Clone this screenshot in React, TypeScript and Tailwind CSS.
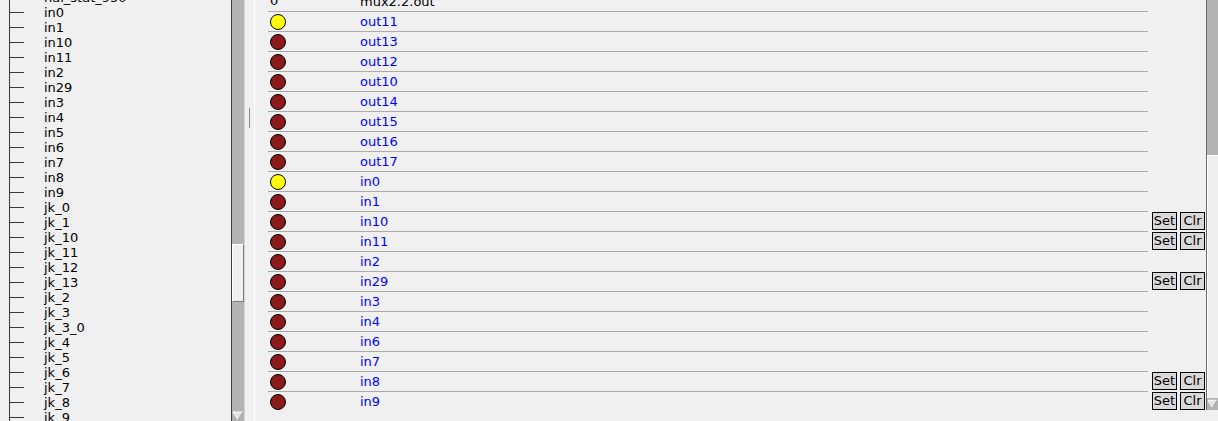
import React from 'react';

const treeItems = [
  'hal_stat_950', 'in0', 'in1', 'in10', 'in11', 'in2', 'in29', 'in3', 'in4', 'in5', 'in6', 'in7', 'in8', 'in9',
  'jk_0', 'jk_1', 'jk_10', 'jk_11', 'jk_12', 'jk_13', 'jk_2', 'jk_3', 'jk_3_0', 'jk_4', 'jk_5', 'jk_6', 'jk_7', 'jk_8', 'jk_9',
];

interface Pin {
  name: string;
  on: boolean;
  buttons?: boolean;
}

const pins: Pin[] = [
  { name: 'out11', on: true },
  { name: 'out13', on: false },
  { name: 'out12', on: false },
  { name: 'out10', on: false },
  { name: 'out14', on: false },
  { name: 'out15', on: false },
  { name: 'out16', on: false },
  { name: 'out17', on: false },
  { name: 'in0', on: true },
  { name: 'in1', on: false },
  { name: 'in10', on: false, buttons: true },
  { name: 'in11', on: false, buttons: true },
  { name: 'in2', on: false },
  { name: 'in29', on: false, buttons: true },
  { name: 'in3', on: false },
  { name: 'in4', on: false },
  { name: 'in6', on: false },
  { name: 'in7', on: false },
  { name: 'in8', on: false, buttons: true },
  { name: 'in9', on: false, buttons: true },
];

const DownArrow = () => (
  <svg width="12" height="10" viewBox="0 0 12 10" className="block">
    <polygon points="1,1 11,1 6,9" fill="#e4e4e4" stroke="#ffffff" strokeWidth="1" />
    <line x1="11" y1="1" x2="6" y2="9" stroke="#8a8a8a" strokeWidth="1" />
  </svg>
);

const TreeRow = ({ label }: { label: string }) => (
  <div className="h-[15px] flex items-center pl-[9px] whitespace-nowrap">
    <div className="w-px h-full bg-[#3a3a3a]" />
    <div className="w-[14px] h-px bg-[#3a3a3a]" />
    <span className="ml-[20px] text-[13px] leading-[15px] text-black">{label}</span>
  </div>
);

const PinRow = ({ pin }: { pin: Pin }) => (
  <div className="h-[20px] flex">
    <div className="w-[893px] flex flex-col">
      <div className="h-px ml-[13px] bg-[#ababab]" />
      <div className="flex-1 flex items-center">
        <div className="w-[105px] pl-[15px]">
          <div
            className={
              pin.on
                ? 'w-4 h-4 rounded-full border border-black bg-[#ffff00]'
                : 'w-4 h-4 rounded-full border border-black bg-[#8b1a1a]'
            }
          />
        </div>
        <span className="text-[13px] leading-[19px] text-[#0000ff]">{pin.name}</span>
      </div>
    </div>
    {pin.buttons && (
      <div className="flex gap-[3px] ml-[4px] pt-px">
        <button className="w-[25px] h-[18px] border border-black bg-[#d9d9d9] text-[13px] leading-[16px] text-black">Set</button>
        <button className="w-[25px] h-[18px] border border-black bg-[#d9d9d9] text-[13px] leading-[16px] text-black">Clr</button>
      </div>
    )}
  </div>
);

export default function App() {
  return (
    <div className="w-[1218px] h-[421px] flex bg-[#f0f0f0] overflow-hidden font-['DejaVu_Sans',sans-serif]">
      {/* signal tree */}
      <div className="w-[231px] h-full overflow-hidden">
        <div className="mt-[-10px]">
          {treeItems.map((t) => (
            <TreeRow key={t} label={t} />
          ))}
        </div>
      </div>

      {/* tree scrollbar */}
      <div className="w-[14px] h-full flex flex-col border-l border-[#3a3a3a] border-r border-r-[#d4d4d4] bg-[#b3b3b3]">
        <div className="h-[244px]" />
        <div className="h-[58px] bg-[#efefef] border-t border-l border-white border-b border-b-[#7a7a7a] border-r border-r-[#7a7a7a]" />
        <div className="flex-1" />
        <div className="h-[10px] flex justify-center">
          <DownArrow />
        </div>
      </div>

      {/* sash */}
      <div className="w-[9px] h-full flex flex-col items-center">
        <div className="mt-[108px] w-px h-[20px] bg-[#8a8a8a]" />
      </div>
      <div className="w-px h-full bg-white" />

      {/* watch list */}
      <div className="w-[951px] h-full overflow-hidden">
        <div className="mt-[-9px]">
          <div className="h-[20px] flex items-center">
            <div className="w-[105px] pl-[15px] text-[13px] text-black">0</div>
            <span className="text-[13px] leading-[19px] text-black">mux2.2.out</span>
          </div>
          {pins.map((p) => (
            <PinRow key={p.name} pin={p} />
          ))}
        </div>
      </div>

      {/* watch scrollbar */}
      <div className="w-[12px] h-[410px] flex flex-col border-l border-[#6a6a6a] bg-[#b3b3b3]">
        <div className="h-[155px]" />
        <div className="flex-1 bg-[#efefef] border-t border-l border-white" />
        <div className="h-[12px] flex justify-center items-center">
          <DownArrow />
        </div>
      </div>
    </div>
  );
}
